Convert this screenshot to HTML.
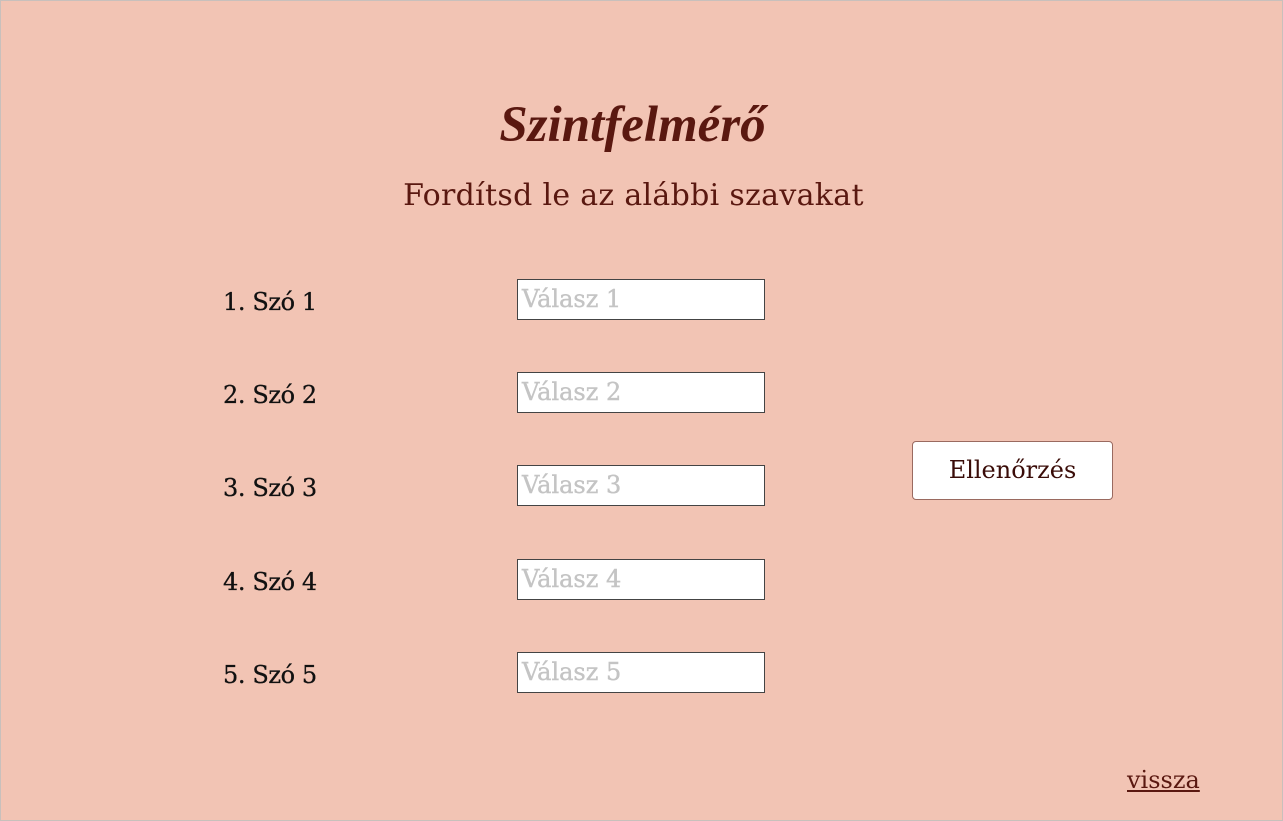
<!DOCTYPE html>
<html><head><meta charset="utf-8"><style>
html,body{margin:0;padding:0}
body{width:1283px;height:821px;background:#f2c4b4;position:relative;overflow:hidden;font-family:"DejaVu Serif",serif;box-sizing:border-box;border:1px solid #c8c0bc}
.a{position:absolute;white-space:nowrap}
h1{position:absolute;left:-10px;width:1283px;top:95px;margin:0;text-align:center;font:italic bold 51px "Liberation Serif",serif;color:#5a1810}
.sub{left:-9px;width:1283px;text-align:center;top:177px;font-size:30px;color:#5a1810;letter-spacing:0.3px}
.lab{left:222px;font-size:24px;color:#111;letter-spacing:-0.4px;-webkit-text-stroke:0.3px #111}
.inp{left:516px;background:#fff;border:1px solid #444;color:#c4c4c4;font-size:24px;line-height:39px;padding-left:4px;box-sizing:border-box;width:248px;height:41px;-webkit-text-stroke:0.4px #c4c4c4}
.btn{left:911px;top:440px;width:201px;height:59px;background:#fff;border:1px solid #9a6a60;border-radius:4px;box-sizing:border-box;text-align:center;line-height:57px;font-size:24px;color:#3a0c08}
.v{left:1126px;top:765px;font-size:24px;color:#5a1810;text-decoration:underline}
</style></head><body>
<h1>Szintfelmérő</h1>
<div class="a sub">Fordítsd le az alábbi szavakat</div>
<div class="a lab" style="top:287px">1. Szó 1</div>
<div class="a lab" style="top:380px">2. Szó 2</div>
<div class="a lab" style="top:473px">3. Szó 3</div>
<div class="a lab" style="top:567px">4. Szó 4</div>
<div class="a lab" style="top:660px">5. Szó 5</div>
<div class="a inp" style="top:278px">Válasz 1</div>
<div class="a inp" style="top:371px">Válasz 2</div>
<div class="a inp" style="top:464px">Válasz 3</div>
<div class="a inp" style="top:558px">Válasz 4</div>
<div class="a inp" style="top:651px">Válasz 5</div>
<div class="a btn">Ellenőrzés</div>
<div class="a v">vissza</div>
</body></html>
